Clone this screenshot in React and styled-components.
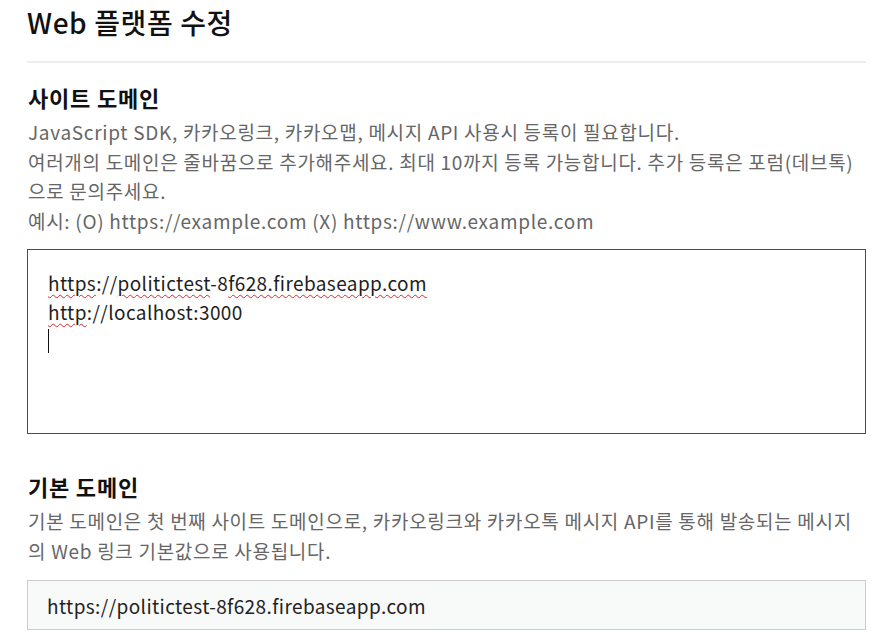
import React from 'react'
import styled, { createGlobalStyle } from 'styled-components'

const GlobalStyle = createGlobalStyle`
  body {
    margin: 0;
    background: #fff;
    font-family: "Noto Sans CJK KR", "Noto Sans", sans-serif;
    color: #1a1a1a;
  }
`

const Page = styled.div`
  padding: 0 13px 0 27px;
`

const Title = styled.h2`
  margin: 0;
  padding-top: 4px;
  height: 57px;
  font-size: 28px;
  font-weight: 500;
  line-height: 36px;
  letter-spacing: 0.6px;
  color: #111;
  border-bottom: 2px solid #eeeeee;
`

const Section = styled.section`
  padding-top: ${(p) => p.$top}px;
`

const Heading = styled.h3`
  margin: 0 0 5px 1px;
  font-size: 22px;
  font-weight: 700;
  line-height: 30px;
  letter-spacing: 0.8px;
  color: #111;
`

const Desc = styled.p`
  margin: 0 0 0 1px;
  font-size: 19px;
  line-height: 29.5px;
  letter-spacing: 0.7px;
  color: #666;
`

const Editor = styled.div`
  margin-top: 14px;
  height: 155px;
  padding: 19px 20px 9px 20px;
  border: 1px solid #3d4a8c;
  font-size: 19px;
  line-height: 28.5px;
  letter-spacing: 0.4px;
  color: #1e1e1e;
`

const Line = styled.div`
  height: 28.5px;
`

const Typo = styled.span`
  text-decoration: underline wavy #e02828;
  text-decoration-thickness: 1px;
  text-underline-offset: 3px;
`

const Caret = styled.span`
  display: inline-block;
  width: 1px;
  height: 24px;
  margin-top: 3px;
  background: #111;
  vertical-align: top;
`

const ReadOnly = styled.div`
  margin-top: 15px;
  height: 50px;
  box-sizing: border-box;
  padding: 0 19px;
  display: flex;
  align-items: center;
  background: #f8f9f9;
  border: 1px solid #cccccc;
  font-size: 19px;
  letter-spacing: 0.4px;
  color: #222;
`

export default function App() {
  return (
    <>
      <GlobalStyle />
      <Page>
        <Title>Web 플랫폼 수정</Title>
        <Section $top={19}>
          <Heading>사이트 도메인</Heading>
          <Desc>
            JavaScript SDK, 카카오링크, 카카오맵, 메시지 API 사용시 등록이 필요합니다.
            <br />
            여러개의 도메인은 줄바꿈으로 추가해주세요. 최대 10까지 등록 가능합니다. 추가 등록은 포럼(데브톡)으로 문의주세요.
            <br />
            예시: (O) https://example.com (X) https://www.example.com
          </Desc>
          <Editor>
            <Line>
              <Typo>https</Typo>://<Typo>politictest</Typo>-8<Typo>f628.firebaseapp.com</Typo>
            </Line>
            <Line>
              <Typo>http</Typo>://localhost:3000
            </Line>
            <Line>
              <Caret />
            </Line>
          </Editor>
        </Section>
        <Section $top={37}>
          <Heading>기본 도메인</Heading>
          <Desc>
            기본 도메인은 첫 번째 사이트 도메인으로, 카카오링크와 카카오톡 메시지 API를 통해 발송되는 메시지의 Web 링크 기본값으로 사용됩니다.
          </Desc>
          <ReadOnly>https://politictest-8f628.firebaseapp.com</ReadOnly>
        </Section>
      </Page>
    </>
  )
}
